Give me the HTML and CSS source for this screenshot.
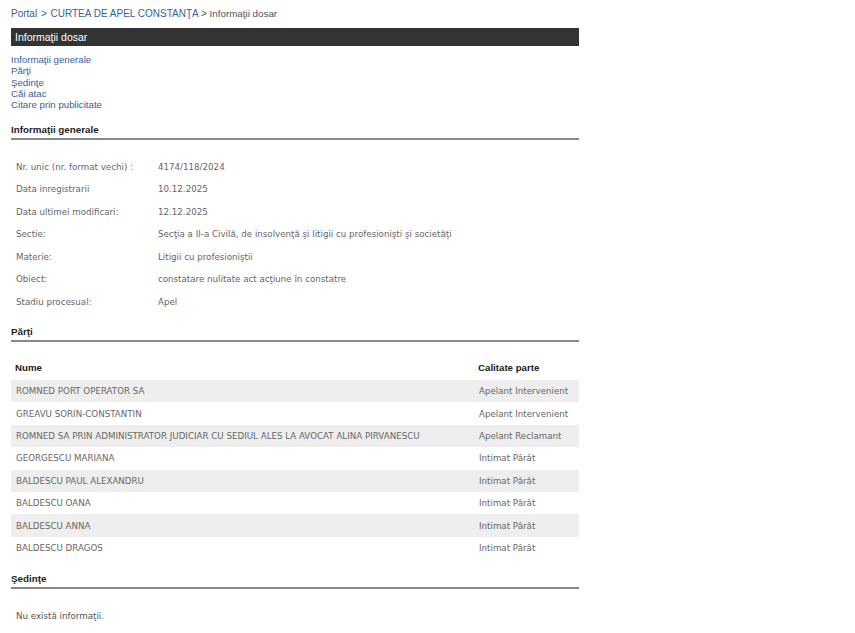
FILE: index.html
```html
<!DOCTYPE html>
<html lang="ro">

<head>
    <meta charset="UTF-8" />
    <meta name="viewport" content="width=device-width, initial-scale=1.0" />
    <title>Informaţii dosar</title>
    <link rel="stylesheet" href="styles.css">
</head>

<body>

    <div class="page">

        <div class="breadcrumb">
            <a href="#">Portal</a>
            <span class="sep">&gt;</span>
            <a href="#">CURTEA DE APEL CONSTANŢA</a>
            <span class="sep last">&gt;</span>
            <span class="current">Informaţii dosar</span>
        </div>

        <div class="title-bar">Informaţii dosar</div>

        <div class="toc">
            <a href="#generale">Informaţii generale</a>
            <a href="#parti">Părţi</a>
            <a href="#sedinte">Şedinţe</a>
            <a href="#cai">Căi atac</a>
            <a href="#citare">Citare prin publicitate</a>
        </div>

        <h2 class="section-title" id="generale">Informaţii generale</h2>

        <table class="info-table">
            <tr>
                <td class="label">Nr. unic (nr. format vechi) :</td>
                <td>4174/118/2024</td>
            </tr>
            <tr>
                <td class="label">Data inregistrarii</td>
                <td>10.12.2025</td>
            </tr>
            <tr>
                <td class="label">Data ultimei modificari:</td>
                <td>12.12.2025</td>
            </tr>
            <tr>
                <td class="label">Sectie:</td>
                <td>Secţia a II-a Civilă, de insolvenţă şi litigii cu profesionişti şi societăţi</td>
            </tr>
            <tr>
                <td class="label">Materie:</td>
                <td>Litigii cu profesioniştii</td>
            </tr>
            <tr>
                <td class="label">Obiect:</td>
                <td>constatare nulitate act acţiune în constatre</td>
            </tr>
            <tr>
                <td class="label">Stadiu procesual:</td>
                <td>Apel</td>
            </tr>
        </table>

        <h2 class="section-title parti-title" id="parti">Părţi</h2>

        <table class="parti-table">
            <thead>
                <tr>
                    <th>Nume</th>
                    <th class="col-calitate">Calitate parte</th>
                </tr>
            </thead>
            <tbody>
                <tr>
                    <td>ROMNED PORT OPERATOR SA</td>
                    <td>Apelant Intervenient</td>
                </tr>
                <tr>
                    <td>GREAVU SORIN-CONSTANTIN</td>
                    <td>Apelant Intervenient</td>
                </tr>
                <tr>
                    <td>ROMNED SA PRIN ADMINISTRATOR JUDICIAR CU SEDIUL ALES LA AVOCAT ALINA PIRVANESCU</td>
                    <td>Apelant Reclamant</td>
                </tr>
                <tr>
                    <td>GEORGESCU MARIANA</td>
                    <td>Intimat Pârât</td>
                </tr>
                <tr>
                    <td>BALDESCU PAUL ALEXANDRU</td>
                    <td>Intimat Pârât</td>
                </tr>
                <tr>
                    <td>BALDESCU OANA</td>
                    <td>Intimat Pârât</td>
                </tr>
                <tr>
                    <td>BALDESCU ANNA</td>
                    <td>Intimat Pârât</td>
                </tr>
                <tr>
                    <td>BALDESCU DRAGOS</td>
                    <td>Intimat Pârât</td>
                </tr>
            </tbody>
        </table>

        <h2 class="section-title sedinte-title" id="sedinte">Şedinţe</h2>

        <p class="empty">Nu există informaţii.</p>

    </div>

</body>

</html>
```

FILE: styles.css
```css
body {
    margin: 0;
    background: #fff;
    font-family: "Liberation Sans", Arial, sans-serif;
}

.page {
    width: 568px;
    margin-left: 11px;
    padding-top: 8px;
}

a {
    color: #3a5e96;
    text-decoration: none;
}

.breadcrumb {
    font-size: 10px;
    line-height: 12px;
    color: #555;
}

.breadcrumb .sep {
    margin: 0 1px;
    color: #3a5e96;
}

.breadcrumb .sep.last {
    margin: 0;
    color: #555;
}

.breadcrumb .current {
    font-size: 9.8px;
}

.title-bar {
    margin-top: 8px;
    height: 18px;
    line-height: 18px;
    padding-left: 4px;
    background: #333;
    color: #fff;
    font-size: 10.5px;
}

.toc {
    margin-top: 8px;
    display: flex;
    flex-direction: column;
    font-size: 9.7px;
    line-height: 11.3px;
}

.section-title {
    margin: 14px 0 0;
    padding-bottom: 2px;
    border-bottom: 2px solid #888;
    font-size: 9.8px;
    line-height: 12px;
    font-weight: bold;
    color: #222;
}

.parti-title {
    margin-top: 13px;
}

.sedinte-title {
    margin-top: 14px;
}

.info-table,
.parti-table {
    width: 100%;
    border-collapse: collapse;
    font-family: "DejaVu Sans", Verdana, sans-serif;
    font-size: 8.7px;
    color: #666;
}

.info-table {
    margin-top: 15px;
}

.info-table td {
    height: 22.5px;
    padding: 0 0 0 5px;
    vertical-align: middle;
}

.info-table .label {
    width: 137px;
}

.parti-table {
    margin-top: 14px;
}

.parti-table th {
    height: 24px;
    padding: 0 0 0 4px;
    text-align: left;
    font-family: "Liberation Sans", Arial, sans-serif;
    font-size: 9.7px;
    color: #222;
}

.parti-table td {
    height: 22.4px;
    padding: 0 0 0 5px;
}

.parti-table .col-calitate {
    width: 101px;
}

.parti-table tbody tr:nth-child(odd) {
    background: #eee;
}

.empty {
    margin: 22px 0 0 5px;
    font-family: "DejaVu Sans", Verdana, sans-serif;
    font-size: 8.7px;
    color: #555;
}
```
